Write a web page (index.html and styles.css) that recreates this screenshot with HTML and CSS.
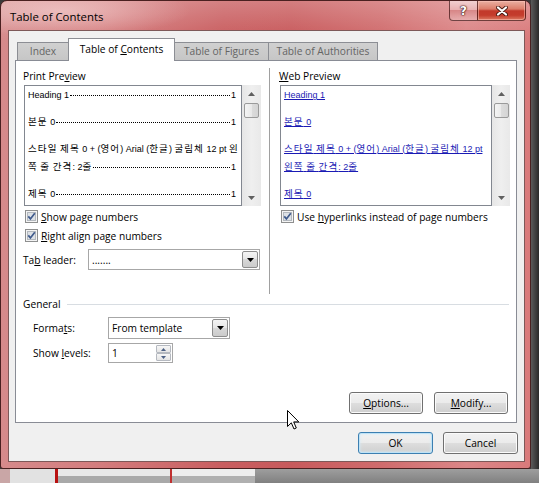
FILE: index.html
```html
<!DOCTYPE html>
<html>
<head>
<meta charset="utf-8">
<link rel="stylesheet" href="styles.css">
</head>
<body>
<div class="screen">
  <div class="window">
    <div class="titlebar">
      <span class="title">Table of Contents</span>
      <div class="caption-btns">
        <span class="cbtn help">?</span>
        <span class="cbtn close"><svg width="12" height="10" viewBox="0 0 12 10"><path d="M2 1.5 L10 8.5 M10 1.5 L2 8.5" stroke="#4a1c14" stroke-width="4" stroke-linecap="round"/><path d="M2 1.5 L10 8.5 M10 1.5 L2 8.5" stroke="#ffffff" stroke-width="2.2" stroke-linecap="round"/></svg></span>
      </div>
    </div>
    <div class="client">
      <div class="tabs">
        <div class="tab t-index">Index</div>
        <div class="tab active t-toc">Table of <u>C</u>ontents</div>
        <div class="tab t-tof">Table of Figures</div>
        <div class="tab t-toa">Table of Authorities</div>
      </div>
      <div class="panel">
        <div class="columns">
          <div class="col left">
            <div class="label">Print Pre<u>v</u>iew</div>
            <div class="preview">
              <div class="list print">
                <div class="entry"><span class="et">Heading 1</span><span class="dots"></span><span class="pg">1</span></div>
                <div class="entry"><span class="et"><span class="ko">본문</span> 0</span><span class="dots"></span><span class="pg">1</span></div>
                <div class="entry">
                  <div class="wrapline"><span class="ko">스타일</span> <span class="ko">제목</span> 0 + (<span class="ko">영어</span>) Arial (<span class="ko">한글</span>) <span class="ko">굴림체</span> 12 pt <span class="ko">왼</span></div>
                  <div class="leadline"><span class="et"><span class="ko">쪽</span> <span class="ko">줄</span> <span class="ko">간격</span>: 2<span class="ko">줄</span></span><span class="dots"></span><span class="pg">1</span></div>
                </div>
                <div class="entry"><span class="et"><span class="ko">제목</span> 0</span><span class="dots"></span><span class="pg">1</span></div>
              </div>
              <div class="vscroll">
                <div class="sb-arrow"><svg width="7" height="4" viewBox="0 0 7 4"><path d="M0 4 L3.5 0 L7 4 Z" fill="#606060"/></svg></div>
                <div class="thumb"></div>
                <div class="sb-space"></div>
                <div class="sb-arrow"><svg width="7" height="4" viewBox="0 0 7 4"><path d="M0 0 L3.5 4 L7 0 Z" fill="#606060"/></svg></div>
              </div>
            </div>
            <div class="cb-row">
              <svg class="cb" width="13" height="13" viewBox="0 0 13 13"><rect x="0.5" y="0.5" width="12" height="12" fill="#f4f4f4" stroke="#8e8f8f"/><rect x="2.5" y="2.5" width="8" height="8" fill="#dde1e6" stroke="#b3b8be"/><path d="M3.3 6.4 L5.4 8.9 L9.8 3.2" stroke="#3f5a8c" stroke-width="1.7" fill="none"/></svg>
              <span><u>S</u>how page numbers</span>
            </div>
            <div class="cb-row">
              <svg class="cb" width="13" height="13" viewBox="0 0 13 13"><rect x="0.5" y="0.5" width="12" height="12" fill="#f4f4f4" stroke="#8e8f8f"/><rect x="2.5" y="2.5" width="8" height="8" fill="#dde1e6" stroke="#b3b8be"/><path d="M3.3 6.4 L5.4 8.9 L9.8 3.2" stroke="#3f5a8c" stroke-width="1.7" fill="none"/></svg>
              <span><u>R</u>ight align page numbers</span>
            </div>
            <div class="leader-row">
              <span class="leader-label">Ta<u>b</u> leader:</span>
              <div class="combo leader-combo">
                <span class="combo-text">.......</span>
                <span class="combo-btn"><svg width="7" height="4" viewBox="0 0 7 4"><path d="M0 0 L3.5 4 L7 0 Z" fill="#000"/></svg></span>
              </div>
            </div>
          </div>
          <div class="vsep"></div>
          <div class="col right">
            <div class="label"><u>W</u>eb Preview</div>
            <div class="preview">
              <div class="list web">
                <div class="entry"><span class="link">Heading 1</span></div>
                <div class="entry"><span class="link"><span class="ko">본문</span> 0</span></div>
                <div class="entry"><span class="link"><span class="ko">스타일</span> <span class="ko">제목</span> 0 + (<span class="ko">영어</span>) Arial (<span class="ko">한글</span>) <span class="ko">굴림체</span> 12 pt</span><br><span class="link"><span class="ko">왼쪽</span> <span class="ko">줄</span> <span class="ko">간격</span>: 2<span class="ko">줄</span></span></div>
                <div class="entry"><span class="link"><span class="ko">제목</span> 0</span></div>
              </div>
              <div class="vscroll">
                <div class="sb-arrow"><svg width="7" height="4" viewBox="0 0 7 4"><path d="M0 4 L3.5 0 L7 4 Z" fill="#606060"/></svg></div>
                <div class="thumb"></div>
                <div class="sb-space"></div>
                <div class="sb-arrow"><svg width="7" height="4" viewBox="0 0 7 4"><path d="M0 0 L3.5 4 L7 0 Z" fill="#606060"/></svg></div>
              </div>
            </div>
            <div class="cb-row">
              <svg class="cb" width="13" height="13" viewBox="0 0 13 13"><rect x="0.5" y="0.5" width="12" height="12" fill="#f4f4f4" stroke="#8e8f8f"/><rect x="2.5" y="2.5" width="8" height="8" fill="#dde1e6" stroke="#b3b8be"/><path d="M3.3 6.4 L5.4 8.9 L9.8 3.2" stroke="#3f5a8c" stroke-width="1.7" fill="none"/></svg>
              <span>Use <u>h</u>yperlinks instead of page numbers</span>
            </div>
          </div>
        </div>
        <div class="general">
          <div class="group-head"><span class="group-label">General</span><span class="group-line"></span></div>
          <div class="form-row formats-row">
            <span class="form-label">Forma<u>t</u>s:</span>
            <div class="combo formats-combo">
              <span class="combo-text">From template</span>
              <span class="combo-btn"><svg width="7" height="4" viewBox="0 0 7 4"><path d="M0 0 L3.5 4 L7 0 Z" fill="#000"/></svg></span>
            </div>
          </div>
          <div class="form-row levels-row">
            <span class="form-label">Show <u>l</u>evels:</span>
            <div class="spin">
              <span class="spin-text">1</span>
              <span class="spin-btns">
                <span class="spin-btn"><svg width="5" height="3" viewBox="0 0 5 3"><path d="M0 3 L2.5 0 L5 3 Z" fill="#4d6185"/></svg></span>
                <span class="spin-btn"><svg width="5" height="3" viewBox="0 0 5 3"><path d="M0 0 L2.5 3 L5 0 Z" fill="#4d6185"/></svg></span>
              </span>
            </div>
          </div>
        </div>
        <div class="panel-buttons">
          <span class="btn"><u>O</u>ptions...</span>
          <span class="btn"><u>M</u>odify...</span>
        </div>
      </div>
      <div class="dialog-buttons">
        <span class="btn default">OK</span>
        <span class="btn">Cancel</span>
      </div>
    </div>
  </div>
  <div class="desk-right"></div>
  <div class="desk-bottom">
    <span class="db-a"></span><span class="db-red"></span><span class="db-b"></span><span class="db-red2"></span><span class="db-c"></span><span class="db-d"></span>
  </div>
  <svg class="cursor" width="13" height="20" viewBox="0 0 13 20"><path d="M0.5 0.5 L0.5 16.5 L4.3 12.8 L7 19 L9.3 18 L6.7 11.9 L11.8 11.9 Z" fill="#ffffff" stroke="#000000" stroke-width="1" stroke-linejoin="round"/></svg>
</div>
</body>
</html>
```

FILE: styles.css
```css
html, body {
  margin: 0;
  padding: 0;
}
body {
  width: 539px;
  height: 483px;
  overflow: hidden;
  background: #3a3a3a;
  font-family: "Open Sans", "Liberation Sans", "Noto Sans CJK KR", sans-serif;
  font-size: 10.2px;
  color: #000;
}
u { text-decoration: underline; text-underline-offset: 1px; }

.screen {
  position: relative;
  display: grid;
  grid-template-columns: 531px 8px;
  grid-template-rows: 469px 14px;
  width: 539px;
  height: 483px;
}

/* window frame */
.window {
  grid-column: 1;
  grid-row: 1;
  box-sizing: border-box;
  border: 1px solid #4a2020;
  border-radius: 7px 7px 3px 3px;
  padding: 0 5px 6px 7px;
  display: flex;
  flex-direction: column;
  background:
    radial-gradient(ellipse 130px 26px at 60px 10px, rgba(255,235,235,0.45), rgba(255,235,235,0) 100%),
    linear-gradient(180deg, rgba(255,255,255,0.22) 0px, rgba(255,255,255,0.05) 28px, rgba(255,255,255,0) 40px),
    linear-gradient(90deg, #d68a8b 0%, #d47d7e 18%, #c95e60 42%, #c85a5c 55%, #d06c6d 72%, #dc8687 88%, #d97a7b 100%);
}
.titlebar {
  height: 29px;
  display: flex;
  justify-content: space-between;
  align-items: flex-start;
}
.title {
  font-size: 11.4px;
  line-height: 31px;
  padding-left: 2px;
  color: #000;
}
.caption-btns {
  display: flex;
  margin-right: -1px;
}
.cbtn {
  box-sizing: border-box;
  height: 20px;
  display: flex;
  align-items: center;
  justify-content: center;
  border: 1px solid rgba(70, 25, 25, 0.75);
  border-top: none;
}
.cbtn.help {
  width: 28px;
  border-right: none;
  border-radius: 0 0 0 4px;
  background: linear-gradient(180deg, rgba(255,255,255,0.5) 0%, rgba(255,255,255,0.25) 45%, rgba(190,90,90,0.25) 50%, rgba(255,255,255,0.25) 100%);
  color: #fff;
  font-family: "DejaVu Sans", sans-serif;
  font-weight: bold;
  font-size: 12px;
  text-shadow: 0 0 1px #3a1010, 0 0 1px #3a1010, 0 0 2px #3a1010;
}
.cbtn.close {
  width: 49px;
  border-radius: 0 0 4px 0;
  background: linear-gradient(180deg, #eab0a2 0%, #dc7d6a 42%, #c2392a 52%, #c43c2c 75%, #dc7a62 100%);
  box-shadow: inset 0 0 0 1px rgba(255,200,190,0.5);
}

/* client */
.client {
  flex: 1;
  background: #f0f0f0;
  border: 1px solid #7d5858;
  display: flex;
  flex-direction: column;
  padding: 7px 7px 0 6px;
}

/* tabs */
.tabs {
  display: flex;
  align-items: flex-end;
  height: 22px;
  padding-left: 2px;
}
.tab {
  box-sizing: border-box;
  height: 18px;
  border: 1px solid #8c8e94;
  border-bottom: none;
  margin-left: -1px;
  text-align: center;
  line-height: 17px;
  background: linear-gradient(180deg, #d0d0d0, #c6c6c6);
  color: #646464;
  white-space: nowrap;
}
.tab:first-child { margin-left: 0; }
.tab.active {
  height: 23px;
  margin-bottom: -1px;
  background: #fff;
  color: #000;
  position: relative;
  z-index: 1;
  line-height: 21px;
}
.t-index { width: 52px; }
.t-toc { width: 107px; }
.t-tof { width: 95px; }
.t-toa { width: 110px; }

/* panel */
.panel {
  box-sizing: border-box;
  height: 363px;
  background: #fff;
  border: 1px solid #898c95;
  display: flex;
  flex-direction: column;
}
.columns {
  display: flex;
  height: 226px;
  padding: 7px 0 0 8px;
}
.col.left { width: 237px; }
.col.right { width: 230px; }
.vsep {
  width: 1px;
  background: #a0a0a0;
  margin: 0 10px 0 8px;
}
.label {
  line-height: 17px;
  height: 16px;
  margin-left: -1px;
  margin-bottom: 1px;
}
.preview {
  display: flex;
  height: 121px;
}
.list {
  flex: none;
  box-sizing: border-box;
  border: 1px solid #828790;
  overflow: hidden;
  padding: 0 5px 0 3px;
  font-family: "Liberation Sans", "Noto Sans CJK KR", sans-serif;
  font-size: 9px;
  line-height: 18px;
}
.ko {
  font-family: "Noto Sans CJK KR", sans-serif;
  font-size: 9.5px;
  letter-spacing: 1.1px;
  line-height: 1;
}
.list.print { width: 218px; }
.list.web { width: 212px; padding-right: 2px; }
.entry {
  margin-bottom: 9px;
  white-space: nowrap;
}
.print .entry, .leadline {
  display: flex;
  align-items: baseline;
}
.print .entry:nth-child(3) { display: block; }
.dots {
  flex: 1;
  border-bottom: 1px dotted #000;
  margin: 0 1px;
  height: 0;
  transform: translateY(-2px);
}
.link {
  color: #1a1ab4;
  text-decoration: underline;
}

.vscroll {
  flex: 1;
  background: linear-gradient(90deg, #e6e6e6, #efefef 50%, #e9e9e9);
  display: flex;
  flex-direction: column;
  align-items: center;
}
.sb-arrow {
  height: 17px;
  display: flex;
  align-items: center;
  justify-content: center;
  width: 100%;
}
.thumb {
  box-sizing: border-box;
  width: 15px;
  height: 15px;
  margin-top: 1px;
  border: 1px solid #9a9a9a;
  border-radius: 2px;
  background: linear-gradient(90deg, #f4f4f4, #e9e9e9 50%, #dcdcdc 50%, #d4d4d4);
}
.sb-space { flex: 1; }

.cb-row {
  display: flex;
  align-items: center;
  height: 19px;
  gap: 3px;
  padding-left: 1px;
  white-space: nowrap;
}
.preview + .cb-row { margin-top: 1px; }
.cb { flex: none; }

.leader-row {
  display: flex;
  align-items: center;
  margin-top: 4px;
}
.leader-label {
  width: 65px;
  margin-left: -1px;
}

.combo {
  box-sizing: border-box;
  display: flex;
  border: 1px solid #a7a7a7;
  background: #fff;
}
.combo-text {
  flex: 1;
  display: flex;
  align-items: center;
  padding-left: 3px;
  white-space: nowrap;
}
.combo-btn {
  box-sizing: border-box;
  width: 16px;
  margin: 1px;
  border: 1px solid #8d8d8d;
  border-radius: 2px;
  background: linear-gradient(180deg, #f4f4f4, #e6e6e6 50%, #d8d8d8 50%, #cbcbcb);
  display: flex;
  align-items: center;
  justify-content: center;
}
.leader-combo { width: 172px; height: 21px; }
.formats-combo { width: 122px; height: 22px; }

/* general */
.general {
  padding: 3px 7px 0 7px;
}
.group-head {
  display: flex;
  align-items: center;
  height: 14px;
}
.group-label { width: 44px; }
.group-line {
  flex: 1;
  height: 1px;
  background: #d8dde2;
}
.form-row {
  display: flex;
  align-items: center;
  padding-left: 10px;
}
.formats-row { margin-top: 6px; height: 22px; }
.levels-row { margin-top: 4px; height: 20px; }
.form-label { width: 75px; }

.spin {
  box-sizing: border-box;
  width: 65px;
  height: 20px;
  display: flex;
  border: 1px solid #a7a7a7;
  background: #fff;
}
.spin-text {
  flex: 1;
  display: flex;
  align-items: center;
  padding-left: 3px;
}
.spin-btns {
  display: flex;
  flex-direction: column;
  width: 15px;
  margin: 1px 1px 1px 0;
}
.spin-btn {
  flex: 1;
  box-sizing: border-box;
  border: 1px solid #b5b9c0;
  border-radius: 1px;
  background: linear-gradient(180deg, #f7f7f7, #e4e4e4);
  display: flex;
  align-items: center;
  justify-content: center;
}

/* buttons */
.panel-buttons {
  margin-top: auto;
  display: flex;
  justify-content: flex-end;
  gap: 11px;
  padding: 0 8px 8px 0;
}
.dialog-buttons {
  display: flex;
  justify-content: flex-end;
  gap: 10px;
  margin-top: 9px;
  margin-right: -1px;
}
.btn {
  box-sizing: border-box;
  width: 74px;
  height: 22px;
  display: flex;
  align-items: center;
  justify-content: center;
  border: 1px solid #707070;
  border-radius: 3px;
  background: linear-gradient(180deg, #f2f2f2 0%, #ebebeb 48%, #dddddd 52%, #cfcfcf 100%);
  box-shadow: inset 0 0 0 1px #fbfbfb;
  white-space: nowrap;
}
.dialog-buttons .btn { width: 75px; }
.btn.default {
  border-color: #3c7fb1;
  box-shadow: inset 0 0 0 1px #bfe3f6, inset 0 0 3px 1px #d4ecf8;
}

/* desktop around */
.desk-right {
  grid-column: 2;
  grid-row: 1;
  background: linear-gradient(90deg, #5a5a5a, #2a2a2a);
}
.desk-bottom {
  grid-column: 1 / 3;
  grid-row: 2;
  display: flex;
  background: #d6d6d6;
}
.db-a { width: 55px; background: linear-gradient(90deg, #c9a6a6 0, #c9a6a6 10px, #e2e2e2 10px); }
.db-red { width: 3px; background: #b81010; }
.db-b { width: 112px; background: linear-gradient(180deg, #e8e8e8 0, #e8e8e8 7px, #a9a9a9 7px); }
.db-red2 { width: 2px; background: #c03030; }
.db-c { width: 83px; background: linear-gradient(180deg, #eeeeee 0, #eeeeee 7px, #b0b0b0 7px); }
.db-d { flex: 1; background: linear-gradient(180deg, #9e9e9e, #808080); }

.cursor {
  position: absolute;
  left: 287px;
  top: 410px;
}
```
